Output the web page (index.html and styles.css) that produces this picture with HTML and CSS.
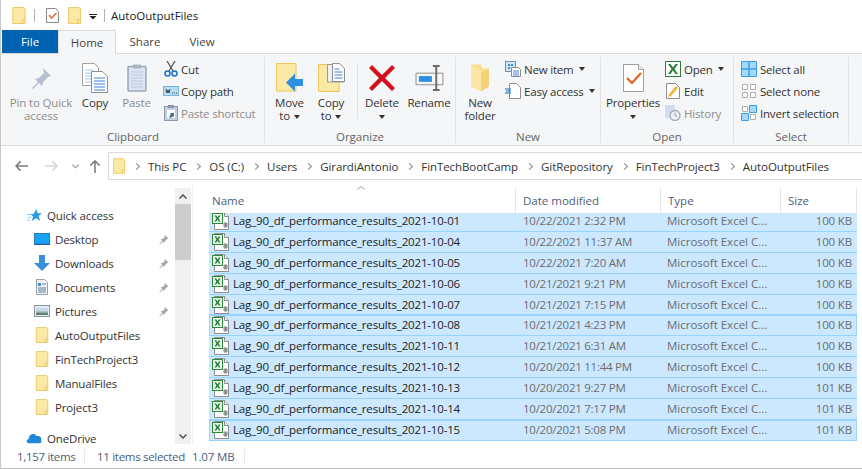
FILE: index.html
```html
<!DOCTYPE html>
<html lang="en">
<head>
    <meta charset="UTF-8">
    <meta name="viewport" content="width=device-width, initial-scale=1.0">
    <title>AutoOutputFiles</title>
    <link rel="stylesheet" href="styles.css">
</head>
<body>
    <!-- Shared icons -->
    <svg class="sprite" xmlns="http://www.w3.org/2000/svg">
        <symbol id="i-folder" viewBox="0 0 14 18">
            <path d="M.5.5h11.5l1.500 1.500v15.500h-13z" fill="#fde9a6" stroke="#ecc65a"/>
            <path d="M10.500 17.500v-4h3" fill="none" stroke="#ecc65a"/>
        </symbol>
        <symbol id="i-pin" viewBox="0 0 24 24">
            <path d="M14 2l8 8-3 1-5 5-1 4-3-3-6 6-1-1 6-6-3-3 4-1 5-5z" fill="#b4bfce"/>
        </symbol>
        <symbol id="i-pin-small" viewBox="0 0 12 12">
            <path d="M7 .5l4.500 4.500-1.500.5-2.500 2.500-.5 2-1.500-1.500-3.500 3-.5-.5 3-3.500-1.500-1.500 2-.5 2.500-2.500z" fill="#a9a9a9"/>
        </symbol>
        <symbol id="i-copy" viewBox="0 0 26 30">
            <path d="M.5.500h12l4 4v18h-16z" fill="#fff" stroke="#a2a2a2"/>
            <path d="M3 7h9M3 10h9M3 13h9M3 16h9M3 19h9" stroke="#a8c4ea"/>
            <path d="M9.500 8.500h11l5 5v16h-16z" fill="#fff" stroke="#8e8e8e"/>
            <path d="M12 15h11M12 18h11M12 21h11M12 24h11M12 27h11" stroke="#3f7fdc"/>
        </symbol>
        <symbol id="i-paste" viewBox="0 0 20 28">
            <rect x="1" y="3" width="18" height="24.500" rx="1" fill="#dbe4f2" stroke="#9aa6b5" stroke-width="1.500"/>
            <rect x="6" y="1" width="8" height="4" fill="#aab4c2"/>
            <path d="M4 8.500h12M4 11.500h12M4 14.500h12M4 17.500h12M4 20.500h12M4 23.500h12" stroke="#bcc9dc"/>
        </symbol>
        <symbol id="i-cut" viewBox="0 0 14 16">
            <path d="M3 0l6 10M11 0l-6 10" stroke="#555" stroke-width="1.300" fill="none"/>
            <circle cx="3.500" cy="12.500" r="2.500" fill="none" stroke="#1b70c4" stroke-width="1.500"/>
            <circle cx="10.500" cy="12.500" r="2.500" fill="none" stroke="#1b70c4" stroke-width="1.500"/>
        </symbol>
        <symbol id="i-path" viewBox="0 0 16 10">
            <rect x=".5" y=".5" width="15" height="9" fill="#b5dcf5" stroke="#7fb4d8"/>
            <path d="M3 3l1 4 1-3 1 3 1-4M9 7h1M11 7h1M13 7h1" stroke="#334" fill="none" stroke-width=".9"/>
        </symbol>
        <symbol id="i-shortcut" viewBox="0 0 14 16">
            <rect x=".5" y="1.500" width="13" height="14" fill="#c2d0e2" stroke="#8d99a8"/>
            <rect x="4" y="0" width="6" height="3" fill="#8d99a8"/>
            <rect x="3" y="5" width="8" height="8" fill="#fff"/>
            <path d="M5 12l2-3-1-1h4v4l-1-1-2 2z" fill="#4d6c90"/>
        </symbol>
        <symbol id="i-move" viewBox="0 0 27 29">
            <path d="M.500.500h19.500v27.500h-19.500z" fill="#fde9a6" stroke="#ecc65a"/>
            <path d="M10 19.500l9-9v5.500h8v7h-8v5.500z" fill="#2f8fe0"/>
        </symbol>
        <symbol id="i-copyto" viewBox="0 0 27 29">
            <path d="M.500 1.500h20.500v27h-20.500z" fill="#fde9a6" stroke="#ecc65a"/>
            <path d="M9.500 1.500h12l5 5v12.500h-17z" fill="#eef1f6" stroke="#9a9a9a"/>
            <path d="M14.500.500h7l5 5v13h-12z" fill="#fff" stroke="#8e8e8e"/>
            <path d="M16.500 6h5M16.500 9h8M16.500 12h8M16.500 15h8" stroke="#3f7fdc"/>
        </symbol>
        <symbol id="i-delete" viewBox="0 0 26 26">
            <path d="M3 0l10 10L23 0l3 3-10 10 10 10-3 3-10-10L3 26l-3-3 10-10L0 3z" fill="#d4101e"/>
        </symbol>
        <symbol id="i-rename" viewBox="0 0 29 27">
            <path d="M.500 8.500h28v12h-28z" fill="#f6f7f8" stroke="#8c8c8c"/>
            <rect x="3.500" y="11.500" width="13.500" height="6" fill="#2b8fe6"/>
            <path d="M18 1h3.500M25 1h-3.500M21.500 1v25M18 26h7" stroke="#6b6b6b" stroke-width="2" fill="none"/>
        </symbol>
        <symbol id="i-newfolder" viewBox="0 0 20 27">
            <path d="M1 0h10l1 4h7v18L11 27 1 22z" fill="#fde08c"/>
            <path d="M11 8l8-4v18l-8 5z" fill="#f4d27a"/>
            <path d="M1 0l10 6v21L1 22z" fill="#fce7a8"/>
        </symbol>
        <symbol id="i-newitem" viewBox="0 0 16 16">
            <rect x=".5" y=".5" width="10" height="10" fill="#cfe4f4" stroke="#7d8fa0"/>
            <path d="M3 3h2v2H3zM6 3h2v2H6zM3 6h2v2H3z" fill="#3d8fd4"/>
            <path d="M6.500 6.500h7l2 2v7h-9z" fill="#fff" stroke="#8e8e8e"/>
            <path d="M8 10h6M8 12h6M8 14h6" stroke="#4a86d8"/>
        </symbol>
        <symbol id="i-easy" viewBox="0 0 16 16">
            <path d="M4.500.5h7l4 4v11h-11z" fill="#fff" stroke="#8e8e8e"/>
            <path d="M0 6h6M1 8h5M0 10h6" stroke="#1b70c4"/>
        </symbol>
        <symbol id="i-props" viewBox="0 0 21 28">
            <path d="M.500.500h15l5 5v22h-20z" fill="#fff" stroke="#a0a0a0"/>
            <path d="M15.500.500v5h5" fill="#eee" stroke="#a0a0a0"/>
            <path d="M4 14l5 5 9-10" fill="none" stroke="#e85c26" stroke-width="2.200"/>
        </symbol>
        <symbol id="i-check" viewBox="0 0 13 16">
            <path d="M.5 1.500h9l3 3v11h-12z" fill="#fff" stroke="#8a8a8a"/>
            <path d="M3 8l2.500 3 5-5" fill="none" stroke="#e85c26" stroke-width="1.400"/>
        </symbol>
        <symbol id="i-xl" viewBox="0 0 16 16">
            <rect x=".5" y=".5" width="15" height="15" fill="#fff" stroke="#2c7d3b"/>
            <path d="M3 3l3.500 5L3 13h2.500L8 9.500l2.500 3.500H13L9.500 8 13 3h-2.500L8 6.500 5.500 3z" fill="#2c7d3b"/>
        </symbol>
        <symbol id="i-edit" viewBox="0 0 14 16">
            <path d="M.5.5h9l4 4v11h-13z" fill="#fff" stroke="#8e8e8e"/>
            <path d="M2 14l1-3 7-8 2 2-7 8z" fill="#f2b63c"/>
        </symbol>
        <symbol id="i-history" viewBox="0 0 16 16">
            <rect x="0" y="0" width="10" height="13" fill="#d2deee"/>
            <circle cx="10" cy="10.500" r="5" fill="#eef2f7" stroke="#a3acb8" stroke-width="1.300"/>
            <path d="M10 7.500v3l2 1" fill="none" stroke="#8d97a4"/>
        </symbol>
        <symbol id="i-selall" viewBox="0 0 16 16">
            <path d="M.5.500h15v15H.5z" fill="#a5d8ff" stroke="#3d9ee8"/>
            <path d="M8 0v16M0 8h16" stroke="#3d9ee8" stroke-width="1.500"/>
        </symbol>
        <symbol id="i-selnone" viewBox="0 0 16 16">
            <path d="M1.500 1.500h5v5h-5zM9.500 1.500h5v5h-5zM1.500 9.500h5v5h-5zM9.500 9.500h5v5h-5z" fill="#fff" stroke="#aeaeae"/>
        </symbol>
        <symbol id="i-invert" viewBox="0 0 16 16">
            <path d="M1.500 1.500h5v5h-5zM9.500 9.500h5v5h-5z" fill="#fff" stroke="#aeaeae"/>
            <path d="M8.500.5h7v7h-7zM.5 8.500h7v7h-7z" fill="#a5d8ff" stroke="#3d9ee8"/>
        </symbol>
        <symbol id="i-star" viewBox="0 0 16 14">
            <path d="M10 0l1.500 4.500H16L12.500 7.500 14 13 10 10 5 13l1.500-5-3-2.500h3.500z" fill="#2e9be8"/>
            <path d="M0 6h4M1 9h3M0 12h3" stroke="#7cc0ef"/>
        </symbol>
        <symbol id="i-desktop" viewBox="0 0 16 12">
            <rect x=".5" y=".5" width="15" height="10.500" fill="#16a3f0" stroke="#2a78c4"/>
            <path d="M0 11.500h16" stroke="#1c5fa8"/>
        </symbol>
        <symbol id="i-down" viewBox="0 0 16 16">
            <path d="M5 0h6v8h5l-8 8-8-8h5z" fill="#3a8fdb"/>
        </symbol>
        <symbol id="i-docs" viewBox="0 0 12 16">
            <path d="M.5.5h8l3 3v12H.5z" fill="#f4f6f9" stroke="#9aa0a8"/>
            <path d="M2 4h3v3H2z" fill="#3d8fd4"/>
            <path d="M6 5h4M2 9h8M2 11h8M2 13h8" stroke="#5c7a9c"/>
        </symbol>
        <symbol id="i-pics" viewBox="0 0 16 12">
            <rect x=".5" y=".5" width="15" height="11" fill="#e4edf5" stroke="#8f959c"/>
            <path d="M2 3h12v3H2z" fill="#c4d8ea"/>
            <path d="M2 6h12v1.500H2z" fill="#a9c4b4"/>
            <path d="M2 7.500h12V10H2z" fill="#5f7f78"/>
        </symbol>
        <symbol id="i-cloud" viewBox="0 0 17 12">
            <path d="M3 11.500C0 11.500 0 7 3 7c0-5 6-7 8-3 4-1 6 2 5 4 1 2 0 3.500-1 3.500z" fill="#1f86d8"/>
        </symbol>
        <symbol id="i-excel" viewBox="0 0 17 18">
            <path d="M2.500.5h10l4 4v13h-14z" fill="#fff" stroke="#8d8d8d"/>
            <path d="M12.500.5v4h4" fill="#eee" stroke="#8d8d8d"/>
            <rect x=".5" y="1.500" width="10" height="10" fill="#eaf4ea" stroke="#2c8a3c"/>
            <path d="M2.500 3.500l2 3-2 3h1.700l1.300-2 1.300 2h1.700l-2-3 2-3H6.800L5.500 5.500l-1.300-2z" fill="#1f7a30"/>
            <path d="M12 11h3v4h-3zM13.500 11v4M12 13h3" fill="none" stroke="#6a6a6a" stroke-width=".8"/>
        </symbol>
    </svg>

    <!-- Title bar -->
    <div class="titlebar">
        <svg class="qa-folder"><use href="#i-folder"/></svg>
        <span class="qa-sep"></span>
        <svg class="qa-check"><use href="#i-check"/></svg>
        <svg class="qa-folder2"><use href="#i-folder"/></svg>
        <span class="qa-drop"></span>
        <span class="qa-sep qa-sep2"></span>
        <span class="title">AutoOutputFiles</span>
    </div>

    <!-- Tabs -->
    <div class="tabs">
        <div class="tab tab-file">File</div>
        <div class="tab tab-home">Home</div>
        <div class="tab tab-share">Share</div>
        <div class="tab tab-view">View</div>
    </div>

    <!-- Ribbon -->
    <div class="ribbon">
        <div class="group group-clipboard">
            <div class="group-body">
                <div class="big big-pin off"><svg class="ic-pin"><use href="#i-pin"/></svg><span>Pin to Quick<br>access</span></div>
                <div class="big big-copy"><svg class="ic-copy"><use href="#i-copy"/></svg><span>Copy</span></div>
                <div class="big big-paste off"><svg class="ic-paste"><use href="#i-paste"/></svg><span>Paste</span></div>
                <div class="small-col">
                    <div class="small"><svg><use href="#i-cut"/></svg>Cut</div>
                    <div class="small"><svg><use href="#i-path"/></svg>Copy path</div>
                    <div class="small off"><svg><use href="#i-shortcut"/></svg>Paste shortcut</div>
                </div>
            </div>
            <div class="group-label">Clipboard</div>
        </div>
        <div class="group group-organize">
            <div class="group-body">
                <div class="big big-move"><svg class="ic-move"><use href="#i-move"/></svg><span>Move<br>to <i class="caret"></i></span></div>
                <div class="big big-copyto"><svg class="ic-move"><use href="#i-copyto"/></svg><span>Copy<br>to <i class="caret"></i></span></div>
                <span class="inner-sep"></span>
                <div class="big big-delete"><svg class="ic-delete"><use href="#i-delete"/></svg><span>Delete<br><i class="caret"></i></span></div>
                <div class="big big-rename"><svg class="ic-rename"><use href="#i-rename"/></svg><span>Rename</span></div>
            </div>
            <div class="group-label">Organize</div>
        </div>
        <div class="group group-new">
            <div class="group-body">
                <div class="big big-newfolder"><svg class="ic-newfolder"><use href="#i-newfolder"/></svg><span>New<br>folder</span></div>
                <div class="small-col">
                    <div class="small"><svg><use href="#i-newitem"/></svg>New item<i class="caret"></i></div>
                    <div class="small"><svg><use href="#i-easy"/></svg>Easy access<i class="caret"></i></div>
                </div>
            </div>
            <div class="group-label">New</div>
        </div>
        <div class="group group-open">
            <div class="group-body">
                <div class="big big-props"><svg class="ic-props"><use href="#i-props"/></svg><span>Properties<br><i class="caret"></i></span></div>
                <div class="small-col">
                    <div class="small"><svg><use href="#i-xl"/></svg>Open<i class="caret"></i></div>
                    <div class="small"><svg><use href="#i-edit"/></svg>Edit</div>
                    <div class="small off"><svg><use href="#i-history"/></svg>History</div>
                </div>
            </div>
            <div class="group-label">Open</div>
        </div>
        <div class="group group-select">
            <div class="group-body">
                <div class="small-col">
                    <div class="small"><svg><use href="#i-selall"/></svg>Select all</div>
                    <div class="small"><svg><use href="#i-selnone"/></svg>Select none</div>
                    <div class="small"><svg><use href="#i-invert"/></svg>Invert selection</div>
                </div>
            </div>
            <div class="group-label">Select</div>
        </div>
    </div>

    <!-- Navigation and address bar -->
    <div class="navbar">
        <div class="nav-buttons">
            <svg class="nav-arrow" viewBox="0 0 14 12"><path d="M6 1L1 6l5 5M1 6h13" fill="none" stroke="#7a7a7a" stroke-width="1.600"/></svg>
            <svg class="nav-arrow" viewBox="0 0 14 12"><path d="M8 1l5 5-5 5M13 6H0" fill="none" stroke="#d4d4d4" stroke-width="1.600"/></svg>
            <svg class="nav-chev" viewBox="0 0 8 5"><path d="M.5.5L4 4 7.500.5" fill="none" stroke="#9a9a9a" stroke-width="1.300"/></svg>
            <svg class="nav-up" viewBox="0 0 12 14"><path d="M1 6l5-5 5 5M6 1v13" fill="none" stroke="#7a7a7a" stroke-width="1.600"/></svg>
        </div>
        <div class="address">
            <svg class="addr-folder"><use href="#i-folder"/></svg>
            <span class="crumb-sep"></span><span>This PC</span>
            <span class="crumb-sep"></span><span>OS (C:)</span>
            <span class="crumb-sep"></span><span>Users</span>
            <span class="crumb-sep"></span><span>GirardiAntonio</span>
            <span class="crumb-sep"></span><span>FinTechBootCamp</span>
            <span class="crumb-sep"></span><span>GitRepository</span>
            <span class="crumb-sep"></span><span>FinTechProject3</span>
            <span class="crumb-sep"></span><span>AutoOutputFiles</span>
        </div>
    </div>

    <!-- Main area -->
    <div class="main">
        <div class="sidebar">
            <div class="tree">
                <div class="node node-top"><svg class="ic-star"><use href="#i-star"/></svg>Quick access</div>
                <div class="node"><svg class="ic-wide"><use href="#i-desktop"/></svg>Desktop<svg class="pin"><use href="#i-pin-small"/></svg></div>
                <div class="node"><svg class="ic-wide"><use href="#i-down"/></svg>Downloads<svg class="pin"><use href="#i-pin-small"/></svg></div>
                <div class="node"><svg class="ic-wide"><use href="#i-docs"/></svg>Documents<svg class="pin"><use href="#i-pin-small"/></svg></div>
                <div class="node"><svg class="ic-wide"><use href="#i-pics"/></svg>Pictures<svg class="pin"><use href="#i-pin-small"/></svg></div>
                <div class="node"><svg class="ic-wide"><use href="#i-folder"/></svg>AutoOutputFiles</div>
                <div class="node"><svg class="ic-wide"><use href="#i-folder"/></svg>FinTechProject3</div>
                <div class="node"><svg class="ic-wide"><use href="#i-folder"/></svg>ManualFiles</div>
                <div class="node"><svg class="ic-wide"><use href="#i-folder"/></svg>Project3</div>
                <div class="node node-top node-drive"><svg class="ic-cloud"><use href="#i-cloud"/></svg>OneDrive</div>
            </div>
            <div class="scrollbar">
                <div class="scroll-btn"><svg viewBox="0 0 8 5"><path d="M.5 4.500L4 1l3.500 3.500" fill="none" stroke="#505050" stroke-width="1.500"/></svg></div>
                <div class="scroll-thumb"></div>
                <div class="scroll-track"></div>
                <div class="scroll-btn"><svg viewBox="0 0 8 5"><path d="M.5.500L4 4l3.500-3.500" fill="none" stroke="#505050" stroke-width="1.500"/></svg></div>
            </div>
        </div>
        <div class="files">
            <div class="file-header">
                <div class="col-head">Name<svg class="sort" viewBox="0 0 8 4"><path d="M.5 3.500L4 .5l3.500 3" fill="none" stroke="#9a9a9a"/></svg></div>
                <div class="col-head">Date modified</div>
                <div class="col-head">Type</div>
                <div class="col-head">Size</div>
            </div>
            <div class="rows">
                <div class="row"><div class="cell-name"><svg><use href="#i-excel"/></svg>Lag_90_df_performance_results_2021-10-01</div><div class="cell-date">10/22/2021 2:32 PM</div><div class="cell-type">Microsoft Excel C...</div><div class="cell-size">100 KB</div></div>
                <div class="row"><div class="cell-name"><svg><use href="#i-excel"/></svg>Lag_90_df_performance_results_2021-10-04</div><div class="cell-date">10/22/2021 11:37 AM</div><div class="cell-type">Microsoft Excel C...</div><div class="cell-size">100 KB</div></div>
                <div class="row"><div class="cell-name"><svg><use href="#i-excel"/></svg>Lag_90_df_performance_results_2021-10-05</div><div class="cell-date">10/22/2021 7:20 AM</div><div class="cell-type">Microsoft Excel C...</div><div class="cell-size">100 KB</div></div>
                <div class="row"><div class="cell-name"><svg><use href="#i-excel"/></svg>Lag_90_df_performance_results_2021-10-06</div><div class="cell-date">10/21/2021 9:21 PM</div><div class="cell-type">Microsoft Excel C...</div><div class="cell-size">100 KB</div></div>
                <div class="row"><div class="cell-name"><svg><use href="#i-excel"/></svg>Lag_90_df_performance_results_2021-10-07</div><div class="cell-date">10/21/2021 7:15 PM</div><div class="cell-type">Microsoft Excel C...</div><div class="cell-size">100 KB</div></div>
                <div class="row row-boxed"><div class="cell-name"><svg><use href="#i-excel"/></svg>Lag_90_df_performance_results_2021-10-08</div><div class="cell-date">10/21/2021 4:23 PM</div><div class="cell-type">Microsoft Excel C...</div><div class="cell-size">100 KB</div></div>
                <div class="row"><div class="cell-name"><svg><use href="#i-excel"/></svg>Lag_90_df_performance_results_2021-10-11</div><div class="cell-date">10/21/2021 6:31 AM</div><div class="cell-type">Microsoft Excel C...</div><div class="cell-size">100 KB</div></div>
                <div class="row"><div class="cell-name"><svg><use href="#i-excel"/></svg>Lag_90_df_performance_results_2021-10-12</div><div class="cell-date">10/20/2021 11:44 PM</div><div class="cell-type">Microsoft Excel C...</div><div class="cell-size">100 KB</div></div>
                <div class="row"><div class="cell-name"><svg><use href="#i-excel"/></svg>Lag_90_df_performance_results_2021-10-13</div><div class="cell-date">10/20/2021 9:27 PM</div><div class="cell-type">Microsoft Excel C...</div><div class="cell-size">101 KB</div></div>
                <div class="row"><div class="cell-name"><svg><use href="#i-excel"/></svg>Lag_90_df_performance_results_2021-10-14</div><div class="cell-date">10/20/2021 7:17 PM</div><div class="cell-type">Microsoft Excel C...</div><div class="cell-size">101 KB</div></div>
                <div class="row row-boxed"><div class="cell-name"><svg><use href="#i-excel"/></svg>Lag_90_df_performance_results_2021-10-15</div><div class="cell-date">10/20/2021 5:08 PM</div><div class="cell-type">Microsoft Excel C...</div><div class="cell-size">101 KB</div></div>
            </div>
        </div>
    </div>

    <!-- Status bar -->
    <div class="statusbar">
        <span class="status-count">1,157 items</span>
        <span class="status-selected">11 items selected</span>
        <span class="status-size">1.07 MB</span>
    </div>
</body>
</html>
```

FILE: styles.css
```css
* {
    box-sizing: border-box;
}
html, body {
    height: 469px;
    overflow: hidden;
}
body {
    margin: 0;
    font-family: "Open Sans", "Noto Sans", sans-serif;
    font-size: 11.5px;
    letter-spacing: -0.15px;
    color: #333;
    background: #fff;
    border-left: 1px solid #c8c8c8;
}
svg {
    display: block;
    flex: none;
}
.sprite {
    display: none;
}

/* Title bar */
.titlebar {
    height: 30px;
    display: flex;
    align-items: center;
    padding-left: 11px;
}
.qa-folder {
    width: 14px;
    height: 17px;
}
.qa-sep {
    width: 1px;
    height: 13px;
    background: #b0b0b0;
    margin-left: 8px;
}
.qa-sep2 {
    margin-left: 7px;
}
.qa-check {
    width: 13px;
    height: 16px;
    margin-left: 11px;
}
.qa-folder2 {
    width: 13px;
    height: 17px;
    margin-left: 9px;
}
.qa-drop {
    width: 8px;
    height: 6px;
    margin-left: 8px;
    margin-top: 3px;
    background: linear-gradient(#222 1px, transparent 1px, transparent 2px, #222 2px) no-repeat;
    clip-path: polygon(0 0, 100% 0, 100% 33%, 50% 100%, 0 33%);
}
.title {
    margin-left: 6px;
    color: #222;
    letter-spacing: 0;
}

/* Tabs */
.tabs {
    height: 24px;
    display: flex;
    padding-left: 1px;
    border-bottom: 1px solid #dadbdc;
}
.tab {
    height: 24px;
    line-height: 24px;
    text-align: center;
    color: #444;
    letter-spacing: 0;
}
.tab-file {
    width: 56px;
    height: 23px;
    background: #0063b1;
    color: #fff;
}
.tab-home {
    width: 58px;
    background: #f5f6f7;
    border: 1px solid #dadbdc;
    border-bottom: none;
}
.tab-share {
    width: 58px;
}
.tab-view {
    width: 56px;
}

/* Ribbon */
.ribbon {
    height: 92px;
    display: flex;
    padding: 3px 0 2px 1px;
    background: #f5f6f7;
    border-bottom: 1px solid #dadbdc;
}
.group {
    display: flex;
    flex-direction: column;
    border-right: 1px solid #e1e2e3;
}
.group-body {
    height: 72px;
    display: flex;
}
.group-label {
    height: 14px;
    line-height: 16px;
    text-align: center;
    color: #666;
    letter-spacing: 0;
}
.group-clipboard {
    width: 263px;
}
.group-organize {
    width: 191px;
}
.group-new {
    width: 145px;
}
.group-open {
    width: 133px;
}
.group-select {
    width: 115px;
}

/* Large button: icon in a fixed band, label below it */
.big {
    display: grid;
    grid-template-rows: 41px auto;
    justify-items: center;
    align-items: center;
    align-content: start;
    text-align: center;
    line-height: 13px;
}
.big span {
    display: block;
    margin-top: -2px;
    white-space: nowrap;
}
.off {
    color: #8d8d8d;
}
.big-pin {
    width: 78px;
}
.ic-pin {
    width: 24px;
    height: 24px;
}
.big-copy {
    width: 30px;
}
.ic-copy {
    width: 26px;
    height: 30px;
}
.big-paste {
    width: 53px;
}
.ic-paste {
    width: 20px;
    height: 29px;
}
.small-col {
    display: flex;
    flex-direction: column;
    padding-top: 1px;
    letter-spacing: -0.2px;
}
.small {
    height: 22px;
    display: flex;
    align-items: center;
    white-space: nowrap;
}
.small svg {
    width: 16px;
    height: 16px;
    margin-right: 3px;
}
.group-clipboard .small svg {
    margin-right: 2px;
}
.caret {
    display: inline-block;
    width: 0;
    height: 0;
    margin-left: 5px;
    vertical-align: middle;
    border-left: 3.500px solid transparent;
    border-right: 3.500px solid transparent;
    border-top: 4px solid #333;
}
.big .caret {
    margin-left: 1px;
}
.big-delete .caret, .big-props .caret {
    margin-left: 0;
}
.big-move {
    width: 41px;
    margin-left: 4px;
}
.big-copyto {
    width: 42px;
}
.ic-move {
    width: 27px;
    height: 29px;
}
.inner-sep {
    width: 1px;
    height: 55px;
    margin: 7px 4px 0 5px;
    background: #e1e2e3;
}
.big-delete {
    width: 40px;
    margin-right: 3px;
}
.ic-delete {
    width: 26px;
    height: 26px;
}
.big-rename {
    width: 48px;
}
.ic-rename {
    width: 29px;
    height: 26px;
}
.big-newfolder {
    width: 48px;
}
.ic-newfolder {
    width: 20px;
    height: 28px;
}
.group-new .small-col {
    margin-left: 1px;
}
.big-props {
    width: 64px;
}
.ic-props {
    width: 21px;
    height: 28px;
}
.group-select .small-col {
    margin-left: 7px;
}

/* Navigation and address bar */
.navbar {
    height: 38px;
    display: flex;
    align-items: center;
    padding-top: 2px;
}
.nav-buttons {
    width: 107px;
    display: flex;
    align-items: center;
    padding-left: 14px;
}
.nav-arrow {
    width: 13px;
    height: 12px;
    margin-right: 17px;
}
.nav-chev {
    width: 7px;
    height: 5px;
    margin-left: -3px;
    margin-right: 10px;
}
.nav-up {
    width: 12px;
    height: 13px;
}
.address {
    flex: 1;
    height: 28px;
    display: flex;
    align-items: center;
    padding-left: 4px;
    white-space: nowrap;
    letter-spacing: -0.08px;
    color: #333;
    border: 1px solid #d9d9d9;
    border-right: none;
}
.addr-folder {
    width: 12px;
    height: 16px;
}
.crumb-sep {
    width: 5px;
    height: 5px;
    margin: 0 9px;
    border-top: 1px solid #8a8a8a;
    border-right: 1px solid #8a8a8a;
    transform: rotate(45deg);
}

/* Main area */
.main {
    height: 260px;
    display: flex;
}
.sidebar {
    width: 192px;
    display: flex;
    border-right: 1px solid #f0f0f0;
}
.tree {
    width: 174px;
    overflow: hidden;
    padding-top: 19px;
    padding-right: 4px;
}
.node {
    height: 24px;
    display: flex;
    align-items: center;
    padding-left: 33px;
    white-space: nowrap;
    color: #333;
}
.node-top {
    padding-left: 26px;
}
.node-drive {
    margin-top: 7px;
}
.ic-star {
    width: 15px;
    height: 13px;
    margin-right: 5px;
}
.ic-wide {
    width: 16px;
    height: 16px;
    margin-right: 5px;
}
.ic-cloud {
    width: 16px;
    height: 12px;
    margin-right: 5px;
    margin-left: -1px;
}
.pin {
    width: 11px;
    height: 11px;
    margin-left: auto;
    margin-right: 2px;
}
.scrollbar {
    width: 16px;
    display: flex;
    flex-direction: column;
    background: #f0f0f0;
    margin-top: 4px;
}
.scroll-btn {
    height: 16px;
    display: flex;
    align-items: center;
    justify-content: center;
}
.scroll-btn svg {
    width: 8px;
    height: 5px;
}
.scroll-thumb {
    height: 56px;
    background: #cdcdcd;
}
.scroll-track {
    flex: 1;
}

/* File list */
.files {
    flex: 1;
    min-width: 0;
    padding-top: 4px;
    padding-left: 16px;
}
.file-header, .row {
    display: grid;
    grid-template-columns: 307px 145px 120px 76px;
}
.file-header {
    position: relative;
    z-index: 1;
    height: 25px;
    background: #fff;
}
.col-head {
    position: relative;
    padding-left: 3px;
    line-height: 25px;
    letter-spacing: 0;
    color: #4c607a;
    border-right: 1px solid #e5e5e5;
}
.col-head + .col-head {
    padding-left: 7px;
}
.sort {
    position: absolute;
    left: 148px;
    top: -2px;
    width: 8px;
    height: 4px;
}
.rows {
    margin-top: -2px;
}
.row {
    width: 648px;
    height: 20.900px;
    line-height: 20px;
    background: #cce8ff;
    border-bottom: 1px solid #99d1ff;
    white-space: nowrap;
}
.row-boxed {
    outline: 1px solid #99d1ff;
    outline-offset: -1px;
}
.cell-name {
    display: flex;
    align-items: center;
    padding-left: 3px;
    letter-spacing: -0.17px;
    color: #222;
}
.cell-name svg {
    width: 17px;
    height: 18px;
    margin-right: 4px;
}
.cell-date {
    padding-left: 7px;
    letter-spacing: -0.25px;
    color: #6d6d6d;
}
.cell-type {
    padding-left: 6px;
    letter-spacing: 0;
    color: #6d6d6d;
}
.cell-size {
    padding-right: 5px;
    text-align: right;
    color: #6d6d6d;
}

/* Status bar */
.statusbar {
    height: 25px;
    display: flex;
    align-items: center;
    white-space: nowrap;
    letter-spacing: -0.3px;
    color: #4c607a;
    border-bottom: 1px solid #c0c0c0;
}
.status-count {
    width: 84px;
    padding-left: 16px;
    border-right: 1px solid #e8e8e8;
}
.status-selected {
    padding-left: 12px;
    width: 107px;
}
.status-size {
    width: 53px;
    letter-spacing: -0.15px;
    border-right: 1px solid #e8e8e8;
}
```
